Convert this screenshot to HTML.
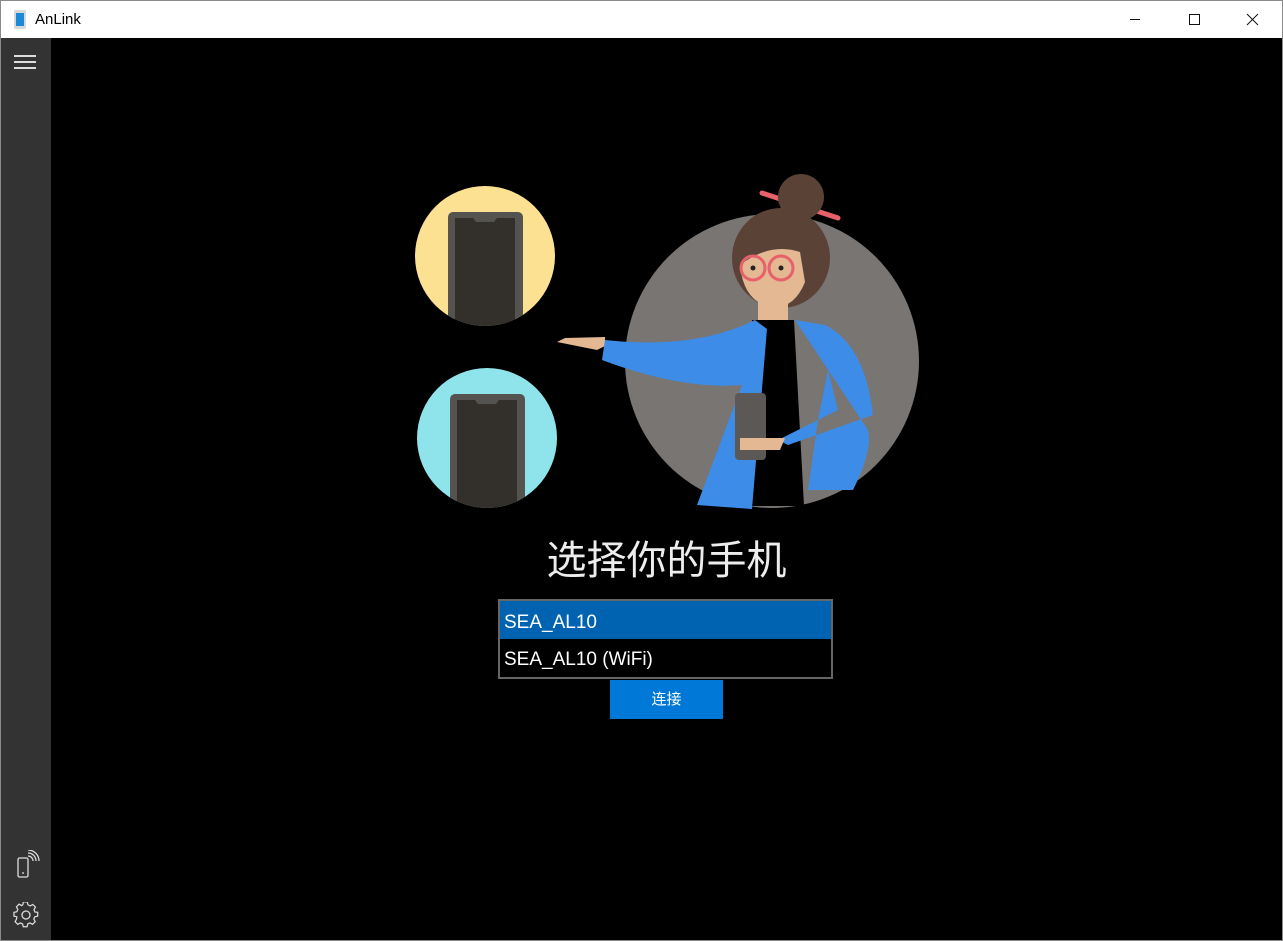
<!DOCTYPE html>
<html><head><meta charset="utf-8"><style>
*{margin:0;padding:0;box-sizing:border-box}
body{width:1283px;height:941px;overflow:hidden;background:#000;font-family:"Liberation Sans","Noto Sans CJK SC",sans-serif;position:relative}
#frame{position:absolute;inset:0;border:1px solid #8a8a8a}
#title{position:absolute;left:1px;top:1px;width:1281px;height:37px;background:#fff}
#title .t{position:absolute;left:34px;top:10px;font-size:15px;color:#000}
#side{position:absolute;left:1px;top:38px;width:50px;height:902px;background:#333}
.abs{position:absolute}
</style></head><body>
<div id="frame"></div>
<div id="title">
<div class="abs" style="left:13px;top:9px;width:12px;height:19px;background:#d8d8d8;border-radius:2px"></div>
<div class="abs" style="left:15px;top:12px;width:8px;height:13px;background:#1a8ad8"></div>
<div class="t">AnLink</div>
<svg class="abs" style="left:1120px;top:0" width="160" height="37" fill="none" stroke="#111" stroke-width="1">
<line x1="9" y1="18.5" x2="19" y2="18.5"/>
<rect x="68.5" y="13.5" width="10" height="10"/>
<line x1="126" y1="13" x2="137" y2="24"/><line x1="137" y1="13" x2="126" y2="24"/>
</svg>
</div>
<div id="side">
<svg class="abs" style="left:13px;top:16px" width="24" height="16" stroke="#ddd" stroke-width="2"><line x1="0" y1="2" x2="22" y2="2"/><line x1="0" y1="8" x2="22" y2="8"/><line x1="0" y1="14" x2="22" y2="14"/></svg>
<svg class="abs" style="left:14px;top:812px" width="26" height="30" fill="none" stroke="#ddd" stroke-width="1.3">
<rect x="3" y="8" width="10" height="19" rx="1.5"/><line x1="7" y1="23" x2="9" y2="23"/>
<path d="M13 6a5 5 0 0 1 5 5M13 3a8 8 0 0 1 8 8M13 0a11 11 0 0 1 11 11"/>
</svg>
<svg class="abs" style="left:12px;top:864px" width="26" height="26" fill="none" stroke="#ddd" stroke-width="1.3">
<circle cx="13" cy="13" r="4"/>
<path d="M11 2h4l.7 3 2.3 1.2 2.8-1.5 2.8 2.8-1.5 2.8L23 12.6l3 .4v4l-3 .7-1.1 2.3 1.5 2.8-2.8 2.8-2.8-1.5-2.3 1.1-.7 3h-4l-.7-3-2.3-1.1-2.8 1.5-2.8-2.8 1.5-2.8L4 17.7 1 17v-4l3-.7 1.1-2.3-1.5-2.8 2.8-2.8 2.8 1.5L10.3 5z" transform="translate(0,-2) scale(0.95)"/>
</svg>
</div>
<svg class="abs" style="left:0;top:0" width="1283" height="941">
<defs>
<clipPath id="c1"><circle cx="485" cy="256" r="70"/></clipPath>
<clipPath id="c2"><circle cx="487" cy="438" r="70"/></clipPath>
</defs>
<circle cx="485" cy="256" r="70" fill="#fde193"/>
<g clip-path="url(#c1)"><rect x="448" y="212" width="75" height="140" rx="5" fill="#555350"/><path d="M455 218h18l3 4h18l3-4h18v130h-60z" fill="#33302c"/></g>
<circle cx="487" cy="438" r="70" fill="#8fe3ea"/>
<g clip-path="url(#c2)"><rect x="450" y="394" width="75" height="140" rx="5" fill="#555350"/><path d="M457 400h18l3 4h18l3-4h18v130h-60z" fill="#33302c"/></g>
<circle cx="772" cy="361" r="147" fill="#787573"/>
<line x1="762" y1="193" x2="838" y2="218" stroke="#e8606a" stroke-width="5" stroke-linecap="round"/>
<circle cx="801" cy="197" r="23" fill="#5a4336"/>
<ellipse cx="781" cy="258" rx="49" ry="50" fill="#5a4336"/>
<path d="M740 265q4 40 35 42q20 0 30-25l-5-30q-30-10-60 13z" fill="#e3b892"/>
<rect x="758" y="300" width="30" height="30" fill="#e3b892"/>
<circle cx="753" cy="268" r="12" fill="none" stroke="#e8606a" stroke-width="3"/>
<circle cx="781" cy="268" r="12" fill="none" stroke="#e8606a" stroke-width="3"/>
<circle cx="753" cy="268" r="2.5" fill="#222"/><circle cx="781" cy="268" r="2.5" fill="#222"/>
<path d="M752 320h42l10 186h-56z" fill="#000"/>
<path d="M605 337l-40 1-8 4 40 8 8-4z" fill="#e3b892"/>
<path d="M755 320q-60 30-150 20l-3 20q80 30 140 25l-45 120 55 4 15-180zM795 320l30 5q40 20 48 90l-85 30-10-5 60-30-10-40-10 50-10 70 45 0q20-40 15-60z" fill="#3d8de8"/>
<rect x="735" y="393" width="31" height="67" rx="4" fill="#5b5855"/>
<path d="M740 438h45l-5 12h-40z" fill="#e3b892"/>
</svg>
<div class="abs" style="left:0;width:1333px;top:528px;text-align:center;font-size:40px;color:#ededed">选择你的手机</div>
<div class="abs" style="left:498px;top:599px;width:335px;height:80px;border:2px solid #666;background:#000">
<div style="height:38px;background:#0063b1;color:#fff;font-size:19px;padding:11px 0 0 4px">SEA_AL10</div>
<div style="height:38px;color:#fff;font-size:19px;padding:10px 0 0 4px">SEA_AL10 (WiFi)</div>
</div>
<div class="abs" style="left:610px;top:680px;width:113px;height:39px;background:#0078d7;color:#fff;font-size:15px;text-align:center;line-height:39px">连接</div>
</body></html>
